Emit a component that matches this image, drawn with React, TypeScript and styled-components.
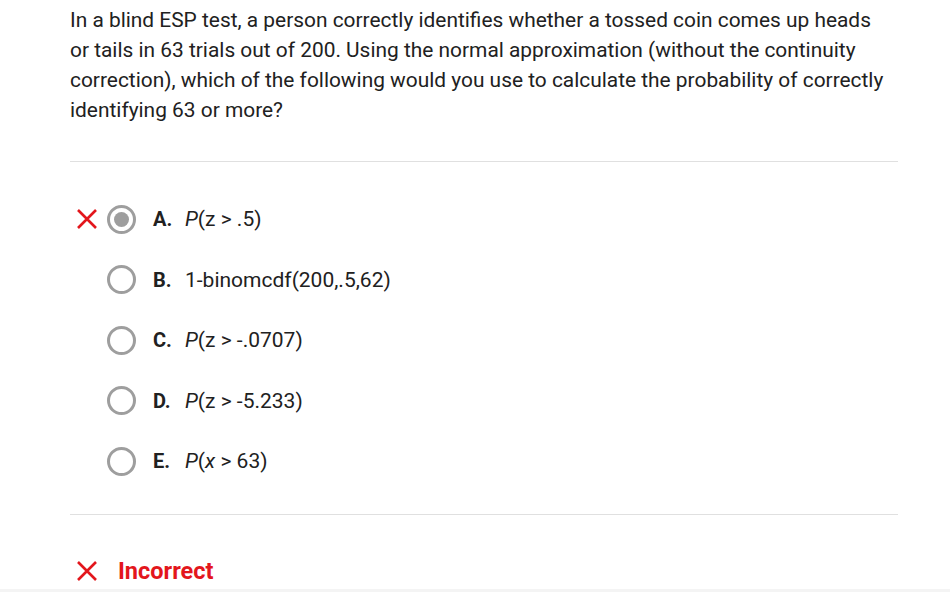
import React from "react";
import styled, { createGlobalStyle } from "styled-components";

const Global = createGlobalStyle`
  html, body { margin: 0; padding: 0; background: #fff; }
  body { font-family: Roboto, "Liberation Sans", sans-serif; color: #212121; }
`;

const Page = styled.div`
  width: 950px;
  height: 592px;
  overflow: hidden;
  display: flex;
  flex-direction: column;
  position: relative;
`;

const Content = styled.div`
  padding: 5px 52px 0 70px;
  display: flex;
  flex-direction: column;
`;

const Question = styled.p`
  margin: 0;
  font-size: 20.9px;
  line-height: 30px;
  color: #212121;
  width: 815px;
`;

const Divider = styled.hr<{ $top: number }>`
  border: none;
  border-top: 1px solid #e0e0e0;
  margin: ${(p) => p.$top}px 0 0 0;
  width: 828px;
`;

const OptionList = styled.div`
  display: flex;
  flex-direction: column;
  padding-top: 27px;
`;

const Row = styled.div`
  height: 60.5px;
  display: flex;
  align-items: center;
`;

const MarkSlot = styled.div`
  width: 37px;
  display: flex;
  align-items: center;
  justify-content: flex-start;
  padding-left: 6px;
  box-sizing: border-box;
`;

const Radio = styled.div<{ $checked?: boolean }>`
  width: 29px;
  height: 29px;
  border-radius: 50%;
  border: 3px solid #9e9e9e;
  box-sizing: border-box;
  display: flex;
  align-items: center;
  justify-content: center;
  &::after {
    content: "";
    display: ${(p) => (p.$checked ? "block" : "none")};
    width: 15px;
    height: 15px;
    border-radius: 50%;
    background: #9e9e9e;
  }
`;

const Letter = styled.span`
  font-weight: 700;
  font-size: 20px;
  margin-left: 17px;
  width: 32px;
  color: #212121;
`;

const Answer = styled.span`
  font-size: 21px;
  color: #212121;
  i { font-style: italic; }
`;

const Result = styled.div`
  display: flex;
  align-items: center;
  margin-top: 42px;
  gap: 20px;
  padding-left: 6px;
`;

const ResultText = styled.span`
  color: #e3161c;
  font-weight: 700;
  font-size: 23.5px;
`;

const Footer = styled.div`
  position: absolute;
  left: 0;
  right: 0;
  bottom: 0;
  height: 3px;
  background: #f4f4f4;
`;

const Cross = ({ size = 22 }: { size?: number }) => (
  <svg width={size} height={size} viewBox="0 0 22 22">
    <path d="M2 2 L20 20 M20 2 L2 20" stroke="#e3161c" strokeWidth="2.6" fill="none" />
  </svg>
);

const options: { l: string; content: React.ReactNode; checked?: boolean }[] = [
  { l: "A.", content: <><i>P</i>(z &gt; .5)</>, checked: true },
  { l: "B.", content: <>1-binomcdf(200,.5,62)</> },
  { l: "C.", content: <><i>P</i>(z &gt; -.0707)</> },
  { l: "D.", content: <><i>P</i>(z &gt; -5.233)</> },
  { l: "E.", content: <><i>P</i>(<i>x</i> &gt; 63)</> },
];

export default function App() {
  return (
    <Page>
      <Global />
      <Content>
        <Question>
          In a blind ESP test, a person correctly identifies whether a tossed coin comes up heads
          or tails in 63 trials out of 200. Using the normal approximation (without the continuity
          correction), which of the following would you use to calculate the probability of correctly
          identifying 63 or more?
        </Question>
        <Divider $top={36} />
        <OptionList>
          {options.map((o) => (
            <Row key={o.l}>
              <MarkSlot>{o.checked ? <Cross /> : null}</MarkSlot>
              <Radio $checked={o.checked} />
              <Letter>{o.l}</Letter>
              <Answer>{o.content}</Answer>
            </Row>
          ))}
        </OptionList>
        <Divider $top={22} />
        <Result>
          <Cross />
          <ResultText>Incorrect</ResultText>
        </Result>
      </Content>
      <Footer />
    </Page>
  );
}
